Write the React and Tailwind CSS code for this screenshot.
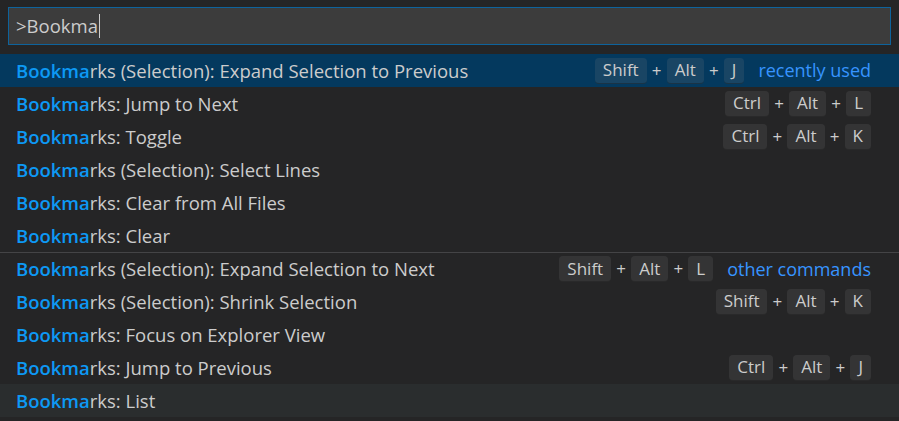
const rows = [
  { rest: "rks (Selection): Expand Selection to Previous", keys: ["Shift", "Alt", "J"], desc: "recently used", selected: true },
  { rest: "rks: Jump to Next", keys: ["Ctrl", "Alt", "L"] },
  { rest: "rks: Toggle", keys: ["Ctrl", "Alt", "K"] },
  { rest: "rks (Selection): Select Lines" },
  { rest: "rks: Clear from All Files" },
  { rest: "rks: Clear" },
  { rest: "rks (Selection): Expand Selection to Next", keys: ["Shift", "Alt", "L"], desc: "other commands", separator: true },
  { rest: "rks (Selection): Shrink Selection", keys: ["Shift", "Alt", "K"] },
  { rest: "rks: Focus on Explorer View" },
  { rest: "rks: Jump to Previous", keys: ["Ctrl", "Alt", "J"] },
  { rest: "rks: List", hover: true },
];

function Keys({ keys }) {
  return (
    <div className="flex items-center">
      {keys.map((k, i) => (
        <div key={i} className="flex items-center">
          {i > 0 && <span className="w-[20px] text-center text-[17px] text-[#cccccc]">+</span>}
          <span className="flex h-[26px] items-center rounded-[4px] border-b border-[#1a1a1a66] bg-[#8080802b] px-[8px] text-[17px] text-[#cccccc]">
            {k}
          </span>
        </div>
      ))}
    </div>
  );
}

export default function App() {
  return (
    <div
      className="h-[421px] w-[899px] overflow-hidden bg-[#252526] text-[#cccccc]"
      style={{ fontFamily: '"Open Sans", "Noto Sans", sans-serif' }}
    >
      <div className="px-[8px] pt-[7px] pb-[9px]">
        <div className="flex h-[38px] items-center border border-[#0e639c] bg-[#3c3c3c] pl-[7px] text-[18.5px] text-[#cccccc]">
          <span>&gt;Bookma</span>
          <span className="ml-[1px] h-[24px] w-[1px] bg-[#cccccc]" />
        </div>
      </div>
      <div>
        {rows.map((r, i) => (
          <div
            key={i}
            className={
              "flex h-[33px] items-center pl-[16px] pr-[28px] text-[18.5px] " +
              (r.selected ? "bg-[#04395e] " : "") +
              (r.hover ? "bg-[#2a2d2e] " : "") +
              (r.separator ? "border-t border-[#444446]" : "")
            }
          >
            <div className="flex-1 whitespace-nowrap">
              <span className="font-semibold text-[#0d99f5]">Bookma</span>
              <span>{r.rest}</span>
            </div>
            {r.keys && <Keys keys={r.keys} />}
            {r.desc && <span className="ml-[14px] text-[18px] text-[#3794ff]">{r.desc}</span>}
          </div>
        ))}
      </div>
    </div>
  );
}
